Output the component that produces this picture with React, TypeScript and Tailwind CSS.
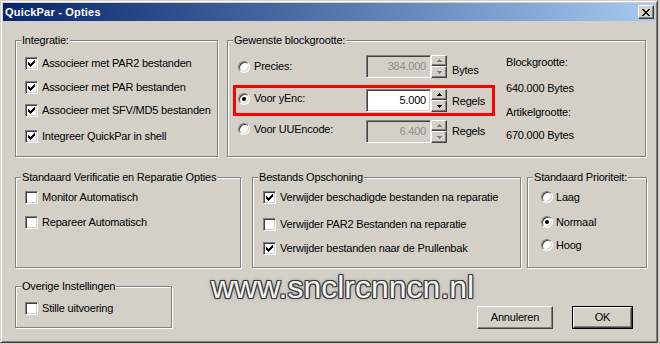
import type { ReactNode } from "react";

const raised =
  "border border-t-white border-l-white border-b-[#404040] border-r-[#404040] shadow-[inset_-1px_-1px_0_#808080]";
const sunken =
  "border border-t-[#808080] border-l-[#808080] border-b-white border-r-white shadow-[inset_1px_1px_0_#404040,inset_-1px_-1px_0_#d4d0c8]";

function GroupBox({ label, className, children }: { label: string; className?: string; children?: ReactNode }) {
  return (
    <div className={`relative shrink-0 border border-[#808080] shadow-[inset_1px_1px_0_#fff,1px_1px_0_#fff] ${className ?? ""}`}>
      <span className="absolute left-[5px] top-[-7px] bg-[#d4d0c8] px-[1px] leading-[13px]">{label}</span>
      {children}
    </div>
  );
}

function Check({ on }: { on?: boolean }) {
  return (
    <span className={`w-[13px] h-[13px] bg-white shrink-0 flex items-center justify-center ${sunken}`}>
      {on && (
        <svg width="7" height="7" viewBox="0 0 7 7" shapeRendering="crispEdges">
          <path
            d="M6 0h1v1h-1z M5 1h2v1h-2z M0 2h1v1h-1z M4 2h3v1h-3z M0 3h2v1h-2z M3 3h3v1h-3z M0 4h5v1h-5z M1 5h3v1h-3z M2 6h1v1h-1z"
            fill="#000"
          />
        </svg>
      )}
    </span>
  );
}

function Radio({ on, className }: { on?: boolean; className?: string }) {
  return (
    <span className={`w-[12px] h-[12px] rounded-full bg-white shrink-0 flex items-center justify-center ${sunken} ${className ?? ""}`}>
      {on && <span className="w-[4px] h-[4px] rounded-full bg-black" />}
    </span>
  );
}

function CheckRow({ on, label, className }: { on?: boolean; label: string; className?: string }) {
  return (
    <div className={`flex items-center h-[13px] gap-[4px] ${className ?? ""}`}>
      <Check on={on} />
      <span>{label}</span>
    </div>
  );
}

function Arrow({ down, color }: { down?: boolean; color: string }) {
  return (
    <svg width="5" height="3" viewBox="0 0 5 3" shapeRendering="crispEdges" className={down ? "rotate-180" : ""}>
      <path d="M2 0h1v1h1v1h1v1h-5v-1h1v-1h1z" fill={color} />
    </svg>
  );
}

function Spin({ value, disabled }: { value: string; disabled?: boolean }) {
  const arrow = disabled ? "#808080" : "#000";
  return (
    <div className="flex h-[23px] shrink-0">
      <div
        className={`w-[65px] h-full flex items-center justify-end pr-[4px] ${sunken} ${
          disabled ? "bg-[#d4d0c8] text-[#8c8c8c]" : "bg-white text-black"
        }`}
      >
        {value}
      </div>
      <div className="w-[16px] h-full flex flex-col">
        <div className={`h-[11px] bg-[#d4d0c8] flex items-center justify-center ${raised}`}>
          <Arrow color={arrow} />
        </div>
        <div className={`flex-1 bg-[#d4d0c8] flex items-center justify-center ${raised}`}>
          <Arrow down color={arrow} />
        </div>
      </div>
    </div>
  );
}

export default function App() {
  return (
    <div className="w-[660px] h-[344px] bg-[#d4d0c8]">
      <div
        className={`relative w-[658px] h-[343px] bg-[#d4d0c8] flex flex-col pt-[2px] px-[2px] border border-t-[#d4d0c8] border-l-[#d4d0c8] border-b-[#404040] border-r-[#404040] shadow-[inset_1px_1px_0_#fff,inset_-1px_-1px_0_#808080] text-[11px] leading-[13px] tracking-[-0.2px] text-black [font-family:'Liberation_Sans',Arial,sans-serif]`}
      >
        {/* Title bar */}
        <div className="h-[18px] flex items-center bg-gradient-to-r from-[#0a246a] to-[#a6caf0] pl-[2px] pr-[1px]">
          <span className="text-white font-bold text-[11px] tracking-[0.2px]">QuickPar - Opties</span>
          <div className={`ml-auto w-[16px] h-[14px] bg-[#d4d0c8] flex items-center justify-center ${raised}`}>
            <svg width="8" height="7" viewBox="0 0 8 7" shapeRendering="crispEdges">
              <path
                d="M0 0h2v1h-2z M6 0h2v1h-2z M1 1h2v1h-2z M5 1h2v1h-2z M2 2h4v1h-4z M3 3h2v1h-2z M2 4h4v1h-4z M1 5h2v1h-2z M5 5h2v1h-2z M0 6h2v1h-2z M6 6h2v1h-2z"
                fill="#000"
              />
            </svg>
          </div>
        </div>

        <div className="pl-[12px] pt-[19px] flex flex-col">
          {/* Row 1 */}
          <div className="flex">
            <GroupBox label="Integratie:" className="w-[203px] h-[117px] pl-[9px] pt-[16px]">
              <CheckRow on label="Associeer met PAR2 bestanden" />
              <CheckRow on label="Associeer met PAR bestanden" className="mt-[11px]" />
              <CheckRow on label="Associeer met SFV/MD5 bestanden" className="mt-[10px]" />
              <CheckRow on label="Integreer QuickPar in shell" className="mt-[13px]" />
            </GroupBox>

            <GroupBox label="Gewenste blockgrootte:" className="ml-[9px] w-[419px] h-[117px] flex">
              <div className="ml-[5px] w-[262px] pt-[14px] flex flex-col">
                <div className="flex items-center h-[23px] pl-[5px]">
                  <Radio />
                  <span className="ml-[4px] w-[112px]">Precies:</span>
                  <Spin value="384.000" disabled />
                  <span className="ml-[5px] mt-[7px]">Bytes</span>
                </div>
                <div className="mt-[7px] h-[31px] border-[3px] border-[#ff0000] flex items-center pl-[2px]">
                  <Radio on className="mb-[4px]" />
                  <span className="ml-[4px] w-[112px] mb-[4px]">Voor yEnc:</span>
                  <Spin value="5.000" />
                  <span className="ml-[5px] mt-[2px]">Regels</span>
                </div>
                <div className="mt-[4px] flex items-center h-[23px] pl-[5px]">
                  <Radio className="mb-[5px]" />
                  <span className="ml-[4px] w-[112px] mb-[5px]">Voor UUEncode:</span>
                  <Spin value="6.400" disabled />
                  <span className="ml-[5px]">Regels</span>
                </div>
              </div>
              <div className="ml-[11px] pt-[15px] flex flex-col">
                <span>Blockgrootte:</span>
                <span className="mt-[13px]">640.000 Bytes</span>
                <span className="mt-[11px]">Artikelgrootte:</span>
                <span className="mt-[10px]">670.000 Bytes</span>
              </div>
            </GroupBox>
          </div>

          {/* Row 2 */}
          <div className="flex mt-[20px]">
            <GroupBox label="Standaard Verificatie en Reparatie Opties" className="w-[226px] h-[91px] pl-[9px] pt-[13px]">
              <CheckRow label="Monitor Automatisch" />
              <CheckRow label="Repareer Automatisch" className="mt-[12px]" />
            </GroupBox>
            <GroupBox label="Bestands Opschoning" className="ml-[11px] w-[269px] h-[91px] pl-[10px] pt-[13px]">
              <CheckRow on label="Verwijder beschadigde bestanden na reparatie" />
              <CheckRow label="Verwijder PAR2 Bestanden na reparatie" className="mt-[14px]" />
              <CheckRow on label="Verwijder bestanden naar de Prullenbak" className="mt-[11px]" />
            </GroupBox>
            <GroupBox label="Standaard Prioriteit:" className="ml-[6px] w-[120px] h-[91px] pl-[13px] pt-[13px]">
              <div className="flex items-center h-[12px] gap-[3px]">
                <Radio />
                <span>Laag</span>
              </div>
              <div className="flex items-center h-[12px] gap-[3px] mt-[13px]">
                <Radio on />
                <span>Normaal</span>
              </div>
              <div className="flex items-center h-[12px] gap-[3px] mt-[11px]">
                <Radio />
                <span>Hoog</span>
              </div>
            </GroupBox>
          </div>

          {/* Row 3 */}
          <div className="flex mt-[18px]">
            <GroupBox label="Overige Instellingen" className="w-[157px] h-[42px] pl-[9px] pt-[15px]">
              <CheckRow label="Stille uitvoering" />
            </GroupBox>
            <div className="flex ml-[305px] mt-[20px] h-[23px] gap-[19px]">
              <button className={`w-[76px] h-[23px] bg-[#d4d0c8] flex items-center justify-center ${raised}`}>
                Annuleren
              </button>
              <button className="w-[61px] h-[23px] border border-black bg-[#d4d0c8] p-0">
                <span className={`w-full h-full flex items-center justify-center ${raised}`}>OK</span>
              </button>
            </div>
          </div>
        </div>

        {/* Watermark */}
        <div className="absolute left-[210px] top-[270px] text-[32px] leading-[32px] tracking-normal text-[#f4f4f4] pointer-events-none [text-shadow:1px_0_#3a3a3a,-1px_0_#3a3a3a,0_1px_#3a3a3a,0_-1px_#3a3a3a,1px_1px_#3a3a3a,-1px_-1px_#3a3a3a,1px_-1px_#3a3a3a,-1px_1px_#3a3a3a,0_0_4px_#777]">
          www.snclrcnncn.nl
        </div>
      </div>
    </div>
  );
}
